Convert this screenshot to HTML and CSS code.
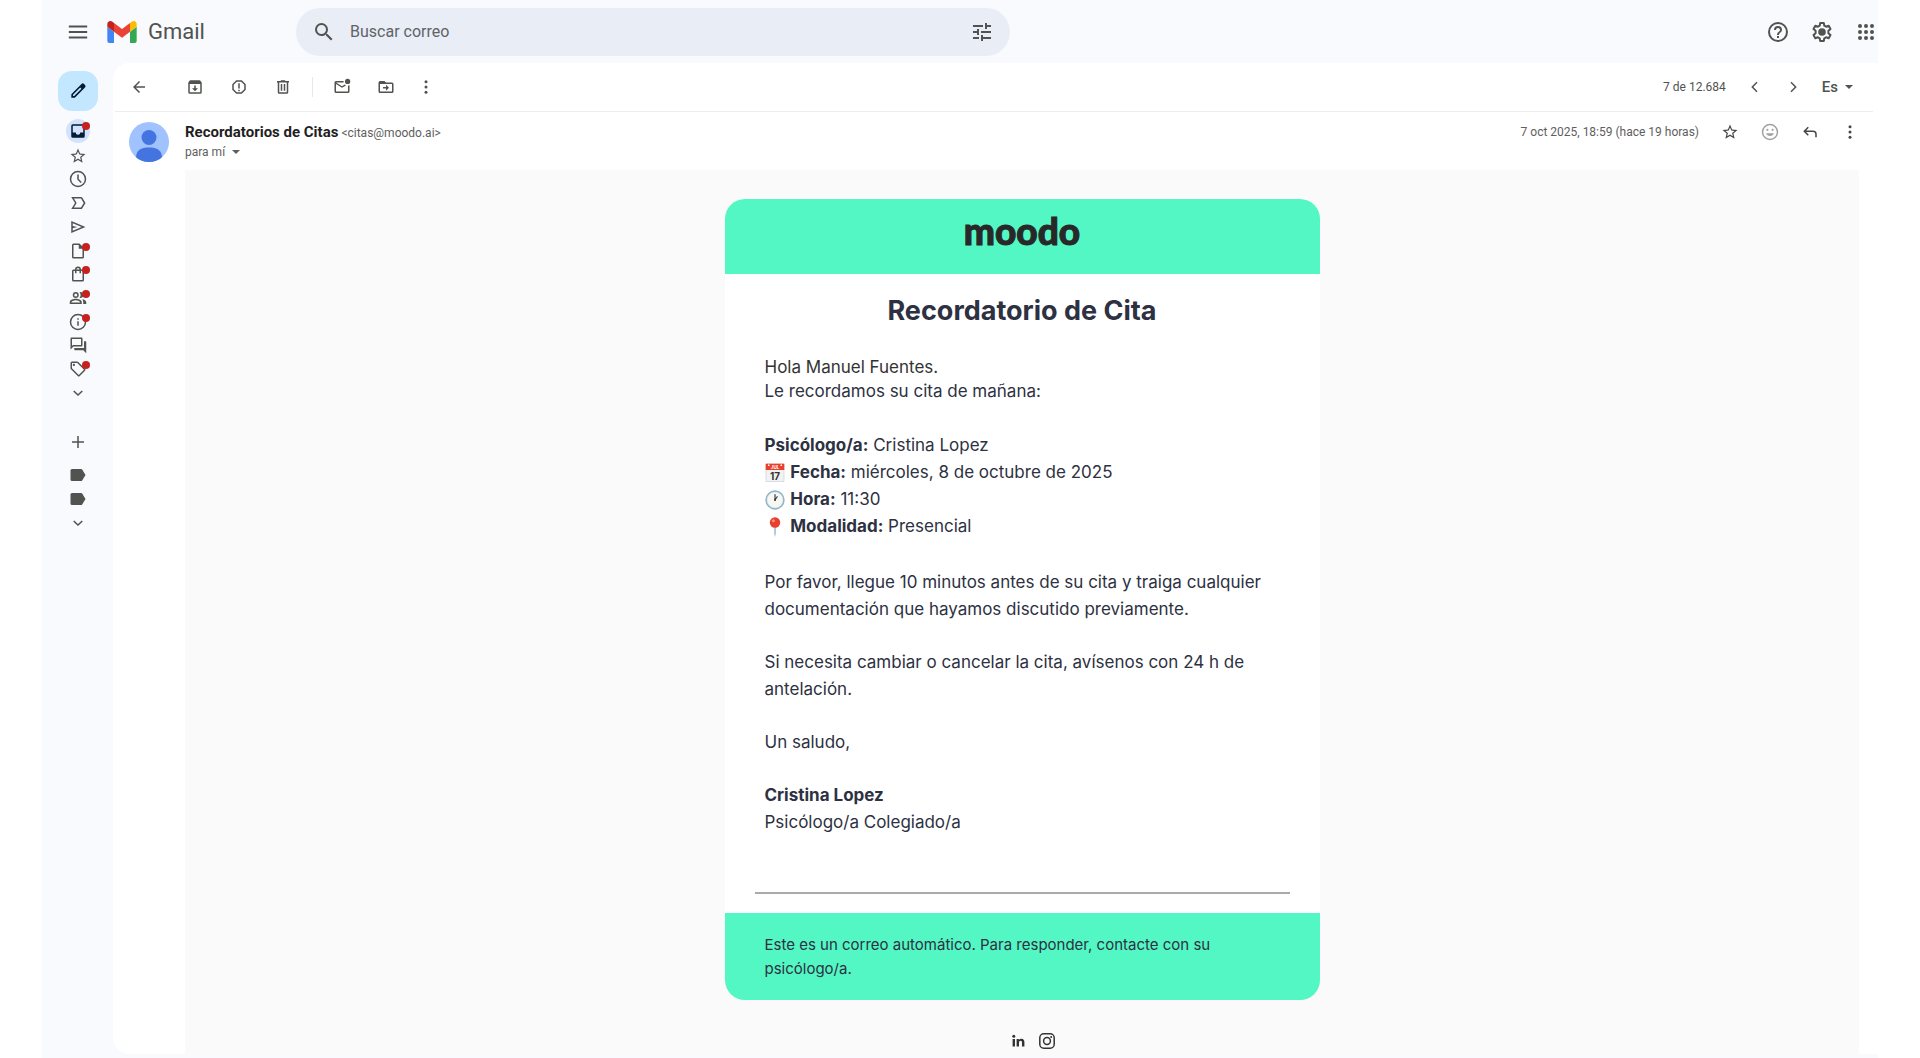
FILE: index.html
```html
<!DOCTYPE html>
<html lang="es">
  <head>
    <meta charset="utf-8">
    <meta name="viewport" content="width=device-width, initial-scale=1">
    <title>Recordatorio de Cita - Gmail</title>
    <link rel="stylesheet" href="styles.css">
  </head>
  <body>
    <div class="app">
      <header class="topbar">
        <button class="icon-btn" aria-label="Menú principal">
          <svg class="icon icon-lg" viewBox="0 0 24 24"><path d="M2 5h20v2H2zm0 6h20v2H2zm0 6h20v2H2z"/></svg>
        </button>
        <a class="brand" href="#">
          <svg class="brand-logo" viewBox="52 42 88 66">
            <path fill="#4285f4" d="M58 108h14V74L52 59v43c0 3.32 2.69 6 6 6"/>
            <path fill="#34a853" d="M120 108h14c3.32 0 6-2.69 6-6V59l-20 15"/>
            <path fill="#fbbc04" d="M120 48v26l20-15v-8c0-7.42-8.47-11.65-14.4-7.2"/>
            <path fill="#ea4335" d="M72 74V48l24 18 24-18v26L96 92"/>
            <path fill="#c5221f" d="M52 51v8l20 15V48l-5.6-4.2c-5.94-4.45-14.4-.22-14.4 7.2"/>
          </svg>
          <span>Gmail</span>
        </a>
        <form class="search">
          <button type="button" class="icon-btn" aria-label="Buscar">
            <svg class="icon icon-lg" viewBox="0 0 24 24"><path d="M15.5 14h-.79l-.28-.27A6.47 6.47 0 0 0 16 9.5 6.5 6.5 0 1 0 9.5 16c1.61 0 3.09-.59 4.23-1.57l.27.28v.79l5 4.99L20.49 19l-4.99-5zm-6 0C7.01 14 5 11.99 5 9.500S7.010 5 9.500 5 14 7.010 14 9.500 11.990 14 9.500 14z"/></svg>
          </button>
          <input type="text" placeholder="Buscar correo" aria-label="Buscar correo">
          <button type="button" class="icon-btn" aria-label="Opciones de búsqueda">
            <svg class="icon icon-lg" viewBox="0 0 24 24"><path d="M3 17v2h6v-2H3zM3 5v2h10V5H3zm10 16v-2h8v-2h-8v-2h-2v6h2zM7 9v2H3v2h4v2h2V9H7zm14 4v-2H11v2h10zm-6-4h2V7h4V5h-4V3h-2v6z"/></svg>
          </button>
        </form>
        <div class="topbar-actions">
          <button class="icon-btn" aria-label="Ayuda">
            <svg class="icon icon-lg" viewBox="0 0 24 24"><path d="M11 18h2v-2h-2v2zm1-16a10 10 0 1 0 0 20 10 10 0 0 0 0-20zm0 18a8 8 0 1 1 0-16 8 8 0 0 1 0 16zm0-14a4 4 0 0 0-4 4h2c0-1.100.9-2 2-2s2 .9 2 2c0 2-3 1.750-3 5h2c0-2.250 3-2.500 3-5a4 4 0 0 0-4-4z"/></svg>
          </button>
          <button class="icon-btn" aria-label="Configuración">
            <svg class="icon icon-lg" viewBox="0 0 24 24"><path fill="none" stroke="currentColor" stroke-width="2" stroke-linejoin="round" d="M10.200 3h3.600l.5 2.700 1.800 1 2.600-.9 1.800 3.100-2.100 1.900v2.400l2.100 1.900-1.800 3.100-2.600-.9-1.800 1-.5 2.700h-3.600l-.5-2.700-1.800-1-2.600.9-1.800-3.100 2.100-1.900v-2.400L3.500 8.900l1.800-3.100 2.600.9 1.800-1z"/><circle cx="12" cy="12" r="3.800"/></svg>
          </button>
          <button class="icon-btn" aria-label="Aplicaciones de Google">
            <svg class="icon icon-lg" viewBox="0 0 24 24">
              <circle cx="6" cy="6" r="2"/><circle cx="12" cy="6" r="2"/><circle cx="18" cy="6" r="2"/>
              <circle cx="6" cy="12" r="2"/><circle cx="12" cy="12" r="2"/><circle cx="18" cy="12" r="2"/>
              <circle cx="6" cy="18" r="2"/><circle cx="12" cy="18" r="2"/><circle cx="18" cy="18" r="2"/>
            </svg>
          </button>
        </div>
      </header>

      <div class="workspace">
        <nav class="rail">
          <button class="compose" aria-label="Redactar">
            <svg class="icon icon-lg" viewBox="0 0 24 24"><path d="M20.400 4.800 19.200 3.600a2.100 2.100 0 0 0-3 0L4 15.800V20h4.200L20.400 7.800a2.100 2.100 0 0 0 0-3zM7.400 18H6v-1.400l8.700-8.700 1.400 1.400z"/></svg>
          </button>
          <ul class="folders">
            <li><a class="folder active" href="#" aria-label="Recibidos"><svg class="icon" viewBox="0 0 24 24"><path d="M19 3H5a2 2 0 0 0-2 2v14a2 2 0 0 0 2 2h14a2 2 0 0 0 2-2V5a2 2 0 0 0-2-2zm0 11h-4a3 3 0 0 1-6 0H5V5h14z"/></svg><i class="dot"></i></a></li>
            <li><a class="folder" href="#" aria-label="Destacados"><svg class="icon" viewBox="0 0 24 24"><path d="m22 9.240-7.190-.62L12 2 9.190 8.630 2 9.240l5.460 4.730L5.820 21 12 17.270 18.180 21l-1.630-7.030zM12 15.400l-3.760 2.270 1-4.280-3.320-2.880 4.380-.38L12 6.100l1.710 4.040 4.380.38-3.320 2.880 1 4.280z"/></svg></a></li>
            <li><a class="folder" href="#" aria-label="Pospuestos"><svg class="icon" viewBox="0 0 24 24"><path d="M12 1a11 11 0 1 0 0 22 11 11 0 0 0 0-22zm0 20a9 9 0 1 1 0-18 9 9 0 0 1 0 18zM11 6h2v6l4 4-1.400 1.400L11 12.800z"/></svg></a></li>
            <li><a class="folder" href="#" aria-label="Importantes"><svg class="icon" viewBox="0 0 24 24"><path d="M16 20H3l5-8-5-8h13c.7 0 1.300.3 1.600.8L22 12l-4.400 7.200c-.3.5-.9.8-1.600.8zM6.500 18H16l3.600-6L16 6H6.500l3.700 6z"/></svg></a></li>
            <li><a class="folder" href="#" aria-label="Enviados"><svg class="icon" viewBox="0 0 24 24"><path d="M3 20V4l19 8zm2-3 11.850-5L5 7v3.500l6 1.500-6 1.500z"/></svg></a></li>
            <li><a class="folder" href="#" aria-label="Borradores"><svg class="icon" viewBox="0 0 24 24"><path d="M14 2H6a2 2 0 0 0-2 2v16a2 2 0 0 0 2 2h12a2 2 0 0 0 2-2V8zM6 20V4h7v5h5v11z"/></svg><i class="dot"></i></a></li>
            <li><a class="folder" href="#" aria-label="Compras"><svg class="icon" viewBox="0 0 24 24"><path d="M18 6h-2a4 4 0 0 0-8 0H6a2 2 0 0 0-2 2v12a2 2 0 0 0 2 2h12a2 2 0 0 0 2-2V8a2 2 0 0 0-2-2zm-6-2a2 2 0 0 1 2 2h-4a2 2 0 0 1 2-2zm6 16H6V8h2v3h2V8h4v3h2V8h2z"/></svg><i class="dot"></i></a></li>
            <li><a class="folder" href="#" aria-label="Social"><svg class="icon" viewBox="0 0 24 24"><path d="M9 4a4 4 0 1 0 0 8 4 4 0 0 0 0-8zm0 6a2 2 0 1 1 0-4 2 2 0 0 1 0 4zm0 3c-3 0-8 1.300-8 4.500V20h16v-2.500C17 14.300 12 13 9 13zm6 5H3c0-1.500 3-3 6-3s6 1.500 6 3zM15 4a4 4 0 0 1 0 8l-1-.2a6 6 0 0 0 0-7.600zm2.500 9.500c3 .4 5.500 1.800 5.500 4V20h-4v-2.500c0-1.600-.6-3-1.500-4z"/></svg><i class="dot"></i></a></li>
            <li><a class="folder" href="#" aria-label="Notificaciones"><svg class="icon" viewBox="0 0 24 24"><path d="M11 7h2v2h-2zm0 4h2v6h-2zm1-10a11 11 0 1 0 0 22 11 11 0 0 0 0-22zm0 20a9 9 0 1 1 0-18 9 9 0 0 1 0 18z"/></svg><i class="dot"></i></a></li>
            <li><a class="folder" href="#" aria-label="Foros"><svg class="icon" viewBox="0 0 24 24"><path d="M16 4v8H5.200L4 13.200V4zm1-2H3a1 1 0 0 0-1 1v15l4-4h11a1 1 0 0 0 1-1V3a1 1 0 0 0-1-1zm5 5h-2v9H7v2a1 1 0 0 0 1 1h11l4 4V8a1 1 0 0 0-1-1z"/></svg></a></li>
            <li><a class="folder" href="#" aria-label="Promociones"><svg class="icon" viewBox="0 0 24 24"><path d="m21.400 11.600-9-9A2 2 0 0 0 11 2H4a2 2 0 0 0-2 2v7c0 .6.2 1 .6 1.400l9 9a2 2 0 0 0 2.800 0l7-7a2 2 0 0 0 0-2.800zM13 20l-9-9V4h7l9 9z"/><circle cx="6.500" cy="6.500" r="1.500"/></svg><i class="dot"></i></a></li>
            <li><button class="folder" aria-label="Más"><svg class="icon" viewBox="0 0 24 24"><path d="M17 8.600 12 13.200 7 8.600 5.600 10l6.400 6 6.400-6z"/></svg></button></li>
          </ul>
          <ul class="labels">
            <li class="label-add"><button class="folder" aria-label="Crear etiqueta"><svg class="icon" viewBox="0 0 24 24"><path d="M20 13h-7v7h-2v-7H4v-2h7V4h2v7h7z"/></svg></button></li>
            <li><a class="folder" href="#" aria-label="Etiqueta"><svg class="icon" viewBox="0 0 24 24"><path d="M17.600 4.800A2 2 0 0 0 16 4H4a2 2 0 0 0-2 2v12a2 2 0 0 0 2 2h12a2 2 0 0 0 1.600-.8L22 12z"/></svg></a></li>
            <li><a class="folder" href="#" aria-label="Etiqueta"><svg class="icon" viewBox="0 0 24 24"><path d="M17.600 4.800A2 2 0 0 0 16 4H4a2 2 0 0 0-2 2v12a2 2 0 0 0 2 2h12a2 2 0 0 0 1.600-.8L22 12z"/></svg></a></li>
            <li><button class="folder" aria-label="Más etiquetas"><svg class="icon" viewBox="0 0 24 24"><path d="M17 8.600 12 13.200 7 8.600 5.600 10l6.400 6 6.400-6z"/></svg></button></li>
          </ul>
        </nav>

        <main class="panel">
          <div class="toolbar">
            <button class="icon-btn back" aria-label="Volver"><svg class="icon" viewBox="0 0 24 24"><path d="M20 11H7.800l5.600-5.600L12 4l-8 8 8 8 1.400-1.400L7.800 13H20z"/></svg></button>
            <div class="tool-group">
              <button class="icon-btn" aria-label="Archivar"><svg class="icon" viewBox="0 0 24 24"><path d="M20.500 5.200 19.200 3.500A1.500 1.500 0 0 0 18 3H6c-.5 0-.9.2-1.200.5L3.500 5.200C3.200 5.600 3 6 3 6.500V19a2 2 0 0 0 2 2h14a2 2 0 0 0 2-2V6.500c0-.5-.2-.9-.5-1.300zM19 19H5V8h14zM11 10v3.500H8l4 4 4-4h-3V10z"/></svg></button>
              <button class="icon-btn" aria-label="Marcar como spam"><svg class="icon" viewBox="0 0 24 24"><path d="M15.700 3H8.300L3 8.300v7.400L8.300 21h7.400l5.300-5.300V8.300zM19 14.900 14.900 19H9.100L5 14.900V9.100L9.100 5h5.800L19 9.100zM11 7h2v7h-2zm0 8.500h2v2h-2z"/></svg></button>
              <button class="icon-btn" aria-label="Eliminar"><svg class="icon" viewBox="0 0 24 24"><path d="M15 4V3H9v1H4v2h1v13a2 2 0 0 0 2 2h10a2 2 0 0 0 2-2V6h1V4zm2 15H7V6h10zM9 8h2v9H9zm4 0h2v9h-2z"/></svg></button>
            </div>
            <div class="tool-group split">
              <button class="icon-btn" aria-label="Marcar como no leído"><svg class="icon" viewBox="0 0 24 24"><path d="M22 9.900V18a2 2 0 0 1-2 2H4a2 2 0 0 1-2-2V6a2 2 0 0 1 2-2h10.100a5 5 0 0 0 0 2H4l8 5 3.700-2.300a5 5 0 0 0 1.600 1.200L12 13 4 8v10h16v-7.900z"/><circle cx="19.500" cy="4.500" r="3.500"/></svg></button>
              <button class="icon-btn" aria-label="Mover a"><svg class="icon" viewBox="0 0 24 24"><path d="M20 6h-8l-2-2H4a2 2 0 0 0-2 2v12a2 2 0 0 0 2 2h16a2 2 0 0 0 2-2V8a2 2 0 0 0-2-2zm0 12H4V8h16zm-8-1 4-4-4-4v3H8v2h4z"/></svg></button>
            </div>
            <button class="icon-btn more" aria-label="Más"><svg class="icon" viewBox="0 0 24 24"><circle cx="12" cy="5" r="2"/><circle cx="12" cy="12" r="2"/><circle cx="12" cy="19" r="2"/></svg></button>
            <div class="pager">
              <span class="count">7 de 12.684</span>
              <button class="icon-btn" aria-label="Más reciente"><svg class="icon" viewBox="0 0 24 24"><path d="M15.400 6.400 14 5l-7 7 7 7 1.400-1.400L9.800 12z"/></svg></button>
              <button class="icon-btn" aria-label="Anterior"><svg class="icon" viewBox="0 0 24 24"><path d="M8.600 17.600 10 19l7-7-7-7-1.400 1.400 5.600 5.600z"/></svg></button>
              <button class="lang" aria-label="Herramienta de introducción de texto">Es <i class="caret"></i></button>
            </div>
          </div>

          <div class="message">
            <svg class="avatar" viewBox="0 0 40 40">
              <defs><clipPath id="face"><circle cx="20" cy="20" r="20"/></clipPath></defs>
              <g clip-path="url(#face)">
                <path fill="#a0c3ff" d="M0 0h40v40H0z"/>
                <circle cx="20" cy="15.500" r="7.500" fill="#4374e0"/>
                <path fill="#4374e0" d="M7 36c0-8 5-10.500 13-10.500S33 28 33 36v4H7z"/>
              </g>
            </svg>
            <div class="message-main">
              <div class="message-head">
                <div class="sender">
                  <div class="from"><strong>Recordatorios de Citas</strong> <span>&lt;citas@moodo.ai&gt;</span></div>
                  <button class="to">para mí <i class="caret"></i></button>
                </div>
                <div class="message-actions">
                  <time datetime="2025-10-07T18:59">7 oct 2025, 18:59 (hace 19 horas)</time>
                  <button class="icon-btn" aria-label="Destacar"><svg class="icon" viewBox="0 0 24 24"><path d="m22 9.240-7.190-.62L12 2 9.190 8.630 2 9.240l5.460 4.730L5.820 21 12 17.270 18.180 21l-1.630-7.030zM12 15.400l-3.760 2.270 1-4.280-3.320-2.880 4.380-.38L12 6.100l1.710 4.040 4.380.38-3.320 2.880 1 4.280z"/></svg></button>
                  <button class="icon-btn faded" aria-label="Añadir reacción"><svg class="icon" viewBox="0 0 24 24"><path d="M12 1a11 11 0 1 0 0 22 11 11 0 0 0 0-22zm0 20a9 9 0 1 1 0-18 9 9 0 0 1 0 18z"/><circle cx="8.500" cy="9" r="1.500"/><circle cx="15.500" cy="9" r="1.500"/><path d="M6.800 13.500a5.500 5.500 0 0 0 10.400 0z"/></svg></button>
                  <button class="icon-btn" aria-label="Responder"><svg class="icon" viewBox="0 0 24 24"><path d="M19 19v-4a3 3 0 0 0-3-3H6.800l3.600 3.600L9 17l-6-6 6-6 1.400 1.400L6.800 10H16a5 5 0 0 1 5 5v4z"/></svg></button>
                  <button class="icon-btn" aria-label="Más"><svg class="icon" viewBox="0 0 24 24"><circle cx="12" cy="5" r="2"/><circle cx="12" cy="12" r="2"/><circle cx="12" cy="19" r="2"/></svg></button>
                </div>
              </div>

              <div class="mail">
                <article class="card">
                  <header class="card-head">moodo</header>
                  <div class="card-body">
                    <h1>Recordatorio de Cita</h1>
                    <p class="intro"><span class="hello">Hola Manuel Fuentes.</span><br>Le recordamos su cita de mañana:</p>
                    <ul class="details">
                      <li><strong>Psicólogo/a:</strong> Cristina Lopez</li>
                      <li>
                        <svg class="emoji" viewBox="0 0 20 20">
                          <path fill="#f2f2f2" stroke="#c9c9c9" stroke-width=".6" d="M1 1h18v17.500H1z"/>
                          <path fill="#e8402f" d="M.7.700h18.600v6.300H.7z"/>
                          <path fill="#fff" d="M3 1.500h1.500V3H3zm12.500 0H17V3h-1.500z"/>
                          <text x="10" y="5.600" font-size="4.500" font-weight="700" fill="#fff" text-anchor="middle">JUL</text>
                          <text x="10" y="16.500" font-size="10" font-weight="700" fill="#333" text-anchor="middle">17</text>
                        </svg>
                        <strong>Fecha:</strong> miércoles, 8 de octubre de 2025</li>
                      <li>
                        <svg class="emoji" viewBox="0 0 20 20">
                          <circle cx="10" cy="10" r="8.900" fill="#f7f7f4" stroke="#8fb4c8" stroke-width="1.600"/>
                          <circle cx="10" cy="10" r="7.800" fill="none" stroke="#d7e4ea" stroke-width=".6"/>
                          <path fill="none" stroke="#333" stroke-width="1.100" stroke-linecap="round" d="M10 10V4.500M10 10l2.200-3.300"/>
                          <circle cx="10" cy="10" r="1" fill="#333"/>
                        </svg>
                        <strong>Hora:</strong> 11:30</li>
                      <li>
                        <svg class="emoji" viewBox="0 0 20 20">
                          <path fill="#a9bcc6" d="M9.200 9h1.600v7.500L10 20l-.8-3.500z"/>
                          <circle cx="10" cy="5.500" r="5.200" fill="#e8402f"/>
                          <circle cx="8.400" cy="3.800" r="1.500" fill="#f79084"/>
                        </svg>
                        <strong>Modalidad:</strong> Presencial</li>
                    </ul>
                    <p>Por favor, llegue 10 minutos antes de su cita y traiga cualquier documentación que hayamos discutido previamente.</p>
                    <p>Si necesita cambiar o cancelar la cita, avísenos con 24 h de antelación.</p>
                    <p>Un saludo,</p>
                    <p><strong>Cristina Lopez</strong><br>Psicólogo/a Colegiado/a</p>
                  </div>
                  <hr class="rule">
                  <footer class="card-foot">Este es un correo automático. Para responder, contacte con su psicólogo/a.</footer>
                </article>
                <div class="social">
                  <a href="#" aria-label="LinkedIn"><svg viewBox="0 0 16 16"><circle cx="2.800" cy="3.300" r="1.500"/><path d="M1.600 6h2.400v7.500H1.600zM5.600 6h2.300v1c.5-.8 1.300-1.200 2.400-1.200 2.200 0 3.100 1.300 3.100 3.500v4.200H11V9.700c0-1.100-.3-1.900-1.400-1.900S8 8.600 8 9.700v3.800H5.600z"/></svg></a>
                  <a href="#" aria-label="Instagram"><svg viewBox="0 0 16 16"><g fill="none" stroke="currentColor" stroke-width="1.500"><rect x=".8" y=".8" width="14.400" height="14.400" rx="4"/><circle cx="8" cy="8" r="3.400"/></g><circle cx="12.200" cy="3.900" r="1"/></svg></a>
                </div>
              </div>
            </div>
          </div>
        </main>
      </div>
    </div>
  </body>
</html>
```

FILE: styles.css
```css
* {
  box-sizing: border-box;
}

body {
  margin: 0;
  background: #fff;
  color: #50534f;
  font-family: Roboto, "Liberation Sans", sans-serif;
  font-size: 12px;
}

button {
  padding: 0;
  border: 0;
  background: none;
  color: inherit;
  font: inherit;
  cursor: pointer;
}

a {
  color: inherit;
  text-decoration: none;
}

ul {
  margin: 0;
  padding: 0;
  list-style: none;
}

svg {
  display: block;
  fill: currentColor;
}

.icon {
  width: 18px;
  height: 18px;
}

.icon-lg {
  width: 24px;
  height: 24px;
}

.icon-btn {
  display: flex;
  flex: none;
}

.app {
  display: flex;
  flex-direction: column;
  min-height: 100vh;
  margin: 0 42px;
  padding-bottom: 4px;
  background: #f8fafd;
}

/* top bar */
.topbar {
  display: flex;
  align-items: center;
  height: 63px;
  padding-left: 25px;
}

.topbar > .icon-btn .icon {
  width: 22px;
  height: 22px;
}

.brand {
  display: flex;
  align-items: center;
  gap: 11px;
  width: 190px;
  padding-left: 18px;
  font-size: 22px;
}

.brand-logo {
  width: 30px;
  height: 22px;
}

.search {
  display: flex;
  align-items: center;
  flex: 0 1 714px;
  height: 48px;
  margin-left: 17px;
  padding: 0 16px;
  border-radius: 24px;
  background: #e9eef6;
}

.search input {
  flex: 1;
  min-width: 0;
  margin-left: 14px;
  padding: 0;
  border: 0;
  outline: 0;
  background: none;
  font: 16px Roboto, "Liberation Sans", sans-serif;
}

.search input::placeholder {
  color: #5f6368;
}

.topbar-actions {
  display: flex;
  gap: 20px;
  margin-left: auto;
}

/* left rail */
.workspace {
  display: flex;
  flex: 1;
}

.rail {
  display: flex;
  flex-direction: column;
  align-items: center;
  width: 71px;
  padding-top: 8px;
}

.compose {
  display: flex;
  align-items: center;
  justify-content: center;
  width: 40px;
  height: 40px;
  border-radius: 14px;
  background: #c2e7ff;
  color: #001d35;
}

.compose .icon {
  width: 20px;
  height: 20px;
}

.folders {
  display: flex;
  flex-direction: column;
  justify-content: space-between;
  height: 285px;
  margin-top: 8px;
}

.folder {
  position: relative;
  display: flex;
  align-items: center;
  justify-content: center;
  width: 24px;
  height: 22px;
}

.folder.active {
  height: 24px;
  border-radius: 50%;
  background: #d3e3fd;
  color: #001d35;
}

.dot {
  position: absolute;
  top: 3px;
  right: 0;
  width: 8px;
  height: 8px;
  border-radius: 50%;
  background: #c5221f;
}

.labels {
  display: grid;
  gap: 2px;
  margin-top: 27px;
}

.label-add {
  margin-bottom: 9px;
}

/* message panel */
.panel {
  flex: 1;
  display: flex;
  flex-direction: column;
  min-width: 0;
  border-radius: 16px 0 0 16px;
  background: #fff;
}

.toolbar {
  display: flex;
  align-items: center;
  height: 49px;
  margin: 0 5px 0 2px;
  padding: 0 20px 0 15px;
  border-bottom: 1px solid #eceded;
}

.back {
  margin-right: 38px;
}

.tool-group {
  display: flex;
  gap: 26px;
}

.split {
  margin-left: 20px;
  padding: 1px 0 1px 20px;
  border-left: 1px solid #e6e7e8;
}

.more {
  margin-left: 22px;
}

.pager {
  display: flex;
  align-items: center;
  gap: 20px;
  margin-left: auto;
}

.lang {
  display: flex;
  align-items: center;
  gap: 7px;
  font-size: 15px;
  font-weight: 500;
}

.caret {
  border: 4px solid transparent;
  border-top-color: currentColor;
  border-bottom: 0;
}

.message {
  display: flex;
  flex: 1;
  padding: 10px 19px 0 16px;
}

.avatar {
  flex: none;
  width: 40px;
  height: 40px;
}

.message-main {
  display: flex;
  flex: 1;
  flex-direction: column;
  margin-left: 16px;
}

.message-head {
  display: flex;
  justify-content: space-between;
  align-items: flex-start;
  height: 48px;
}

.from {
  line-height: 20px;
  color: #5e5e5e;
}

.from strong {
  color: #1f1f1f;
  font-size: 15px;
}

.to {
  display: flex;
  align-items: center;
  gap: 7px;
  line-height: 18px;
  color: #5e5e5e;
}

.message-actions {
  display: flex;
  align-items: center;
  gap: 22px;
  height: 20px;
  color: #5e5e5e;
}

.message-actions .icon-btn {
  color: #444746;
}

.message-actions .faded {
  opacity: .5;
}

/* mail content */
.mail {
  flex: 1;
  padding-top: 29px;
  background: #fafafa;
  color: #2d3142;
  font-family: Inter, "Liberation Sans", sans-serif;
}

.card {
  max-width: 595px;
  margin: 0 auto;
  overflow: hidden;
  border-radius: 20px;
  background: #fff;
  font-size: 17px;
  line-height: 27px;
}

.card-head {
  height: 75px;
  padding-top: 8px;
  background: #52f7c3;
  color: #282828;
  font: 900 37px/48px Lato, "Liberation Sans", sans-serif;
  text-align: center;
  -webkit-text-stroke: 1px #282828;
}

.card-body {
  padding: 18px 40px 30px;
}

.card h1 {
  margin: 0 0 26px;
  font-size: 27px;
  line-height: 37px;
  text-align: center;
}

.card p {
  margin: 0 0 26px;
}

.card .intro {
  margin-bottom: 29px;
  line-height: 24px;
}

.hello {
  color: #333;
}

.card .details {
  margin-bottom: 29px;
}

.emoji {
  display: inline-block;
  width: 20px;
  height: 20px;
  margin-right: 1px;
  vertical-align: -5px;
}

.rule {
  margin: 0 30px 19px;
  border: 0;
  border-top: 2px solid #aaa;
}

.card-foot {
  padding: 20px 40px 19px;
  background: #52f7c3;
  font-size: 15px;
  line-height: 24px;
}

/* the links start a little right of the card's middle */
.social {
  display: flex;
  justify-content: center;
  gap: 12px;
  padding: 33px 0 0 22px;
  color: #333;
}

.social svg {
  width: 16px;
  height: 16px;
}
```
